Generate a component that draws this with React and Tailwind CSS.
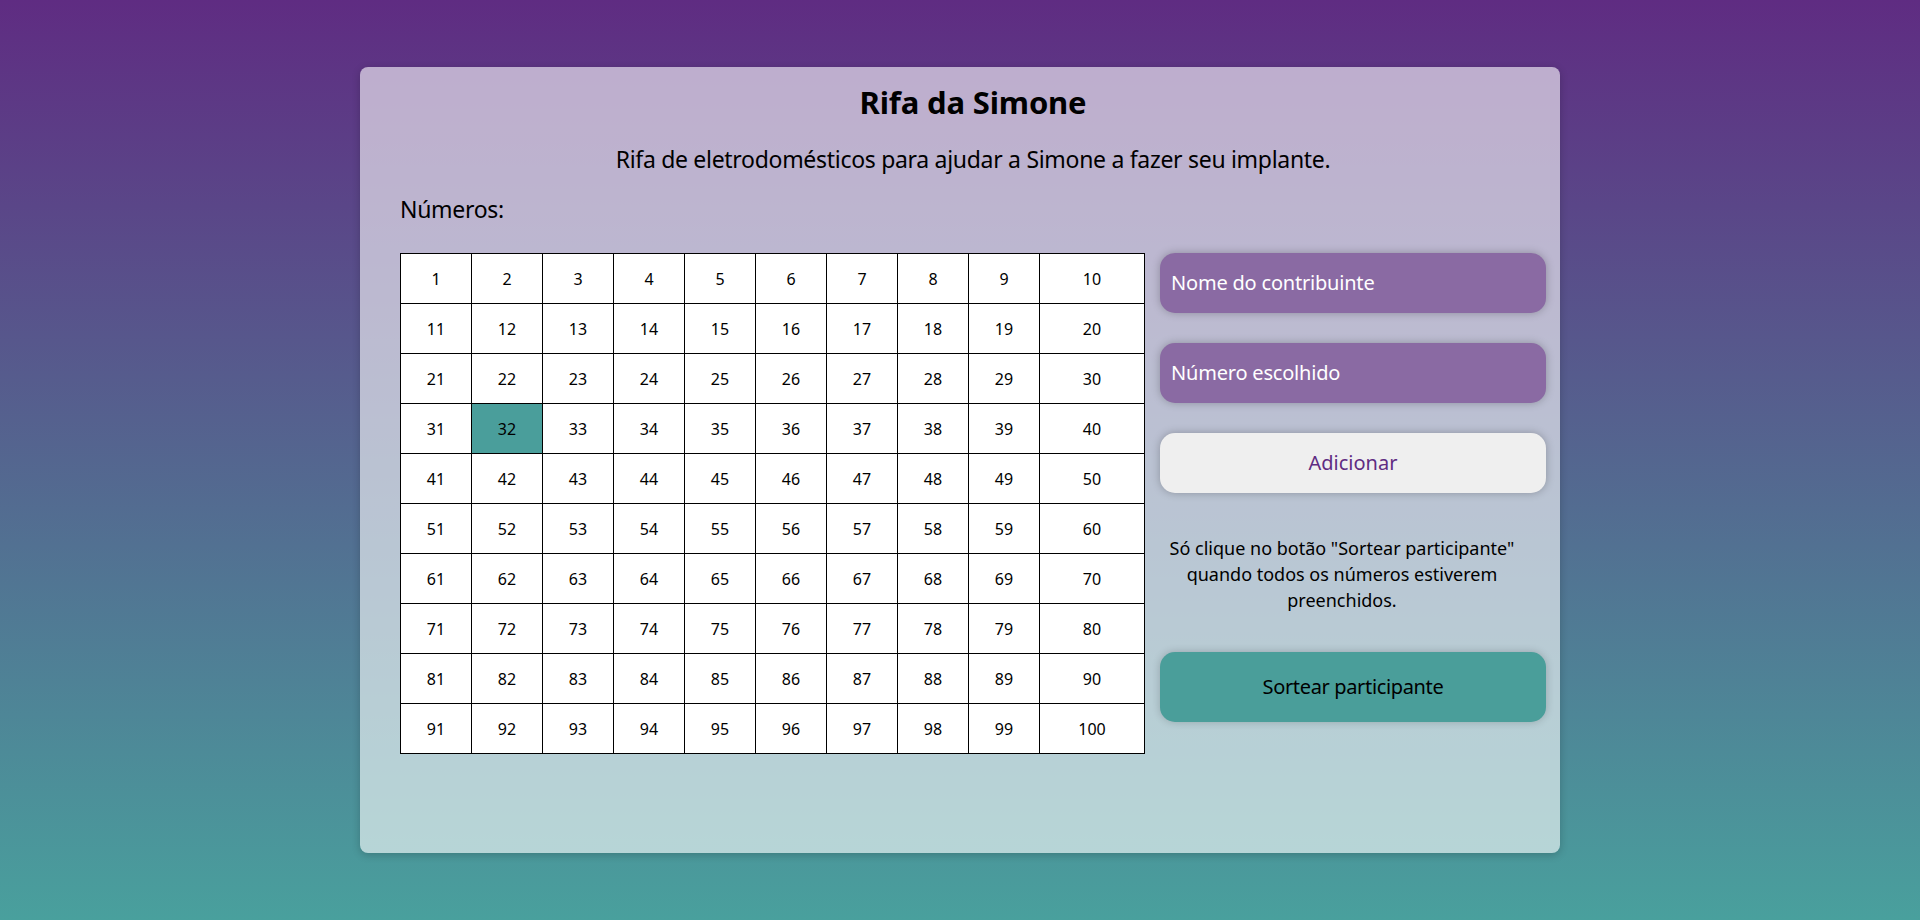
import React from "react";

const rows = Array.from({ length: 10 }, (_, r) =>
  Array.from({ length: 10 }, (_, c) => r * 10 + c + 1)
);

export default function App() {
  return (
    <div
      className="min-h-[920px] w-full bg-[linear-gradient(#5f2c82,#49a09d)] pt-[67px] pb-[66px]"
      style={{ fontFamily: '"Noto Sans", "Open Sans", sans-serif' }}
    >
      <div className="mx-auto w-[1200px] rounded-lg bg-white/60 pt-[15px] pb-[99px] pl-[40px] pr-[14px] text-black shadow-[0_2px_8px_rgba(0,0,0,0.2)]">
        <h1 className="text-center text-[31px] font-bold leading-[40px] tracking-[-0.15px]">Rifa da Simone</h1>
        <p className="mt-[21px] text-center text-[23px] leading-[32px] tracking-[-0.3px]">
          Rifa de eletrodomésticos para ajudar a Simone a fazer seu implante.
        </p>
        <p className="mt-[18px] text-[23px] leading-[32px] tracking-[-0.3px]">Números:</p>
        <div className="mt-[28px] flex items-start gap-[15px]">
          <div className="grid w-[745px] shrink-0 grid-cols-[repeat(9,71px)_105px] border-l border-t border-black bg-white">
            {rows.flat().map((n) => (
              <div
                key={n}
                className={
                  n === 32
                    ? "flex h-[50px] items-center justify-center border-b border-r border-black bg-[#4a9e9b] text-[16px]"
                    : "flex h-[50px] items-center justify-center border-b border-r border-black bg-white text-[16px]"
                }
              >
                {n}
              </div>
            ))}
          </div>
          <div className="flex w-[386px] flex-col">
            <div className="flex h-[60px] items-center rounded-[15px] bg-[#8a6aa3] px-[11px] text-[20px] tracking-[-0.2px] text-white shadow-[0_0_8px_rgba(0,0,0,0.25)]">
              Nome do contribuinte
            </div>
            <div className="mt-[30px] flex h-[60px] items-center rounded-[15px] bg-[#8a6aa3] px-[11px] text-[20px] tracking-[-0.2px] text-white shadow-[0_0_8px_rgba(0,0,0,0.25)]">
              Número escolhido
            </div>
            <button className="mt-[30px] flex h-[60px] items-center justify-center rounded-[15px] bg-[#efefef] text-[20px] text-[#5f2c82] shadow-[0_0_8px_rgba(0,0,0,0.25)]">
              Adicionar
            </button>
            <p className="mt-[42px] mr-[22px] text-center text-[18px] leading-[26px]">
              Só clique no botão "Sortear participante" quando todos os números estiverem preenchidos.
            </p>
            <button className="mt-[39px] flex h-[70px] items-center justify-center rounded-[15px] bg-[#4a9e9a] text-[20px] tracking-[-0.35px] text-black shadow-[0_0_8px_rgba(0,0,0,0.2)]">
              Sortear participante
            </button>
          </div>
        </div>
      </div>
    </div>
  );
}
